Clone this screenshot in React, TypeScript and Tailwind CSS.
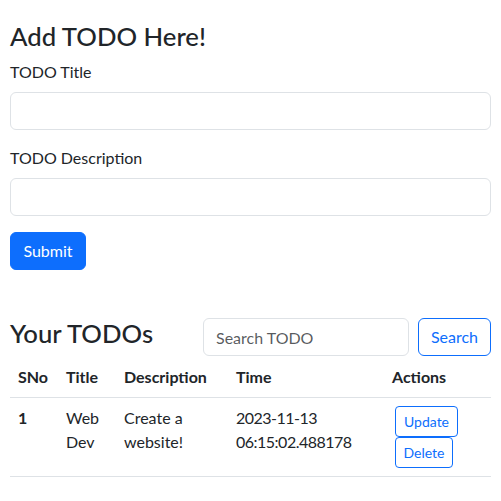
import React from "react";

export default function App() {
  const font = { fontFamily: "Lato, 'Noto Sans', 'Liberation Sans', sans-serif" };
  return (
    <div
      className="w-[501px] min-h-[501px] bg-white text-[#212529] text-[16px] leading-[24px] px-[10px] pt-[21px]"
      style={font}
    >
      <h2 className="text-[25.7px] leading-[31px] font-medium mb-[8px]">Add TODO Here!</h2>
      <form onSubmit={(e) => e.preventDefault()}>
        <div className="mb-[16px]">
          <label className="block mb-[8px]">TODO Title</label>
          <input
            type="text"
            className="block w-full h-[38px] border border-[#dee2e6] rounded-[6px] px-[12px] outline-none"
          />
        </div>
        <div className="mb-[16px]">
          <label className="block mb-[8px]">TODO Description</label>
          <input
            type="text"
            className="block w-full h-[38px] border border-[#dee2e6] rounded-[6px] px-[12px] outline-none"
          />
        </div>
        <button
          type="submit"
          className="h-[38px] w-[76px] rounded-[6px] bg-[#0d6efd] text-white border border-[#0d6efd]"
        >
          Submit
        </button>
      </form>

      <div className="mt-[48px] flex items-start justify-between">
        <h2 className="text-[25.7px] leading-[31px] font-medium">Your TODOs</h2>
        <div className="flex gap-[9px]">
          <input
            type="search"
            placeholder="Search TODO"
            className="w-[206px] h-[38px] border border-[#dee2e6] rounded-[6px] px-[12px] outline-none placeholder:text-[rgba(33,37,41,0.75)]"
          />
          <button className="w-[73px] h-[38px] border border-[#0d6efd] text-[#0d6efd] rounded-[6px]">
            Search
          </button>
        </div>
      </div>

      <table className="w-[481px] table-fixed border-collapse mt-px">
        <colgroup>
          <col className="w-[48px]" />
          <col className="w-[58px]" />
          <col className="w-[112px]" />
          <col className="w-[156px]" />
          <col className="w-[107px]" />
        </colgroup>
        <thead>
          <tr className="border-b border-[#dee2e6]">
            <th className="p-[8px] text-left font-bold align-bottom">SNo</th>
            <th className="p-[8px] text-left font-bold align-bottom">Title</th>
            <th className="p-[8px] text-left font-bold align-bottom">Description</th>
            <th className="p-[8px] text-left font-bold align-bottom">Time</th>
            <th className="p-[8px] text-left font-bold align-bottom">Actions</th>
          </tr>
        </thead>
        <tbody>
          <tr className="border-b border-[#dee2e6]">
            <th className="p-[8px] text-left font-bold align-top">1</th>
            <td className="p-[8px] align-top">
              <span className="block">Web</span>
              <span className="block">Dev</span>
            </td>
            <td className="p-[8px] align-top">
              <span className="block whitespace-nowrap">Create a</span>
              <span className="block whitespace-nowrap">website!</span>
            </td>
            <td className="p-[8px] align-top tracking-[-0.5px]">
              <span className="block whitespace-nowrap">2023-11-13</span>
              <span className="block whitespace-nowrap">06:15:02.488178</span>
            </td>
            <td className="p-[8px] align-top">
              <div className="flex flex-col items-start pl-[3px]">
                <button className="w-[63px] h-[31px] text-[14px] leading-[21px] border border-[#0d6efd] text-[#0d6efd] rounded-[4px]">
                  Update
                </button>
                <button className="w-[58px] h-[31px] text-[14px] leading-[21px] border border-[#0d6efd] text-[#0d6efd] rounded-[4px]">
                  Delete
                </button>
              </div>
            </td>
          </tr>
        </tbody>
      </table>
    </div>
  );
}
